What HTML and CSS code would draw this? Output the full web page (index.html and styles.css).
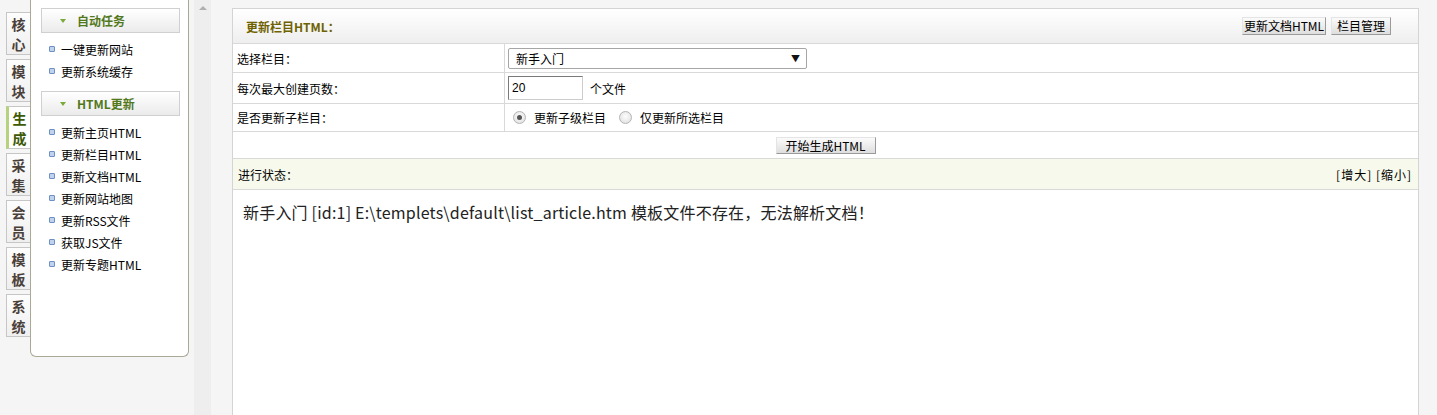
FILE: index.html
```html
<!DOCTYPE html>
<html lang="zh-CN">
<head>
    <meta charset="UTF-8">
    <title>更新栏目HTML</title>
    <link rel="stylesheet" href="styles.css">
</head>
<body>
    <div class="layout">
        <div class="tabs">
            <div class="tab">核<br>心</div>
            <div class="tab">模<br>块</div>
            <div class="tab active">生<br>成</div>
            <div class="tab">采<br>集</div>
            <div class="tab">会<br>员</div>
            <div class="tab">模<br>板</div>
            <div class="tab">系<br>统</div>
        </div>

        <div class="side">
            <div class="side-head"><span class="arrow"></span>自动任务</div>
            <ul class="side-list">
                <li>一键更新网站</li>
                <li>更新系统缓存</li>
            </ul>
            <div class="side-head"><span class="arrow"></span>HTML更新</div>
            <ul class="side-list">
                <li>更新主页HTML</li>
                <li>更新栏目HTML</li>
                <li>更新文档HTML</li>
                <li>更新网站地图</li>
                <li>更新RSS文件</li>
                <li>获取JS文件</li>
                <li>更新专题HTML</li>
            </ul>
        </div>

        <div class="strip"><span class="up"></span></div>

        <div class="main">
            <div class="main-head">
                <span class="main-title">更新栏目HTML：</span>
                <div class="head-btns">
                    <button class="btn btn-doc">更新文档HTML</button>
                    <button class="btn btn-cat">栏目管理</button>
                </div>
            </div>

            <div class="row row-select">
                <div class="label">选择栏目：</div>
                <div class="field">
                    <div class="select">新手入门<span class="caret">▼</span></div>
                </div>
            </div>
            <div class="row row-pages">
                <div class="label">每次最大创建页数：</div>
                <div class="field">
                    <div class="input">20</div>
                    <span class="unit">个文件</span>
                </div>
            </div>
            <div class="row row-radio">
                <div class="label">是否更新子栏目：</div>
                <div class="field">
                    <span class="radio checked"></span><span class="radio-text">更新子级栏目</span>
                    <span class="radio"></span><span class="radio-text">仅更新所选栏目</span>
                </div>
            </div>
            <div class="row row-submit">
                <button class="btn btn-start">开始生成HTML</button>
            </div>

            <div class="status">
                <span>进行状态：</span>
                <span class="zoom-links">[增大] [缩小]</span>
            </div>
            <div class="result">
                新手入门 [id:1] E:\templets\default\list_article.htm 模板文件不存在，无法解析文档！
            </div>
        </div>
    </div>
</body>
</html>
```

FILE: styles.css
```css
body {
    margin: 0;
    background: #f5f5f5;
    font-family: "Noto Sans CJK SC", "Liberation Sans", sans-serif;
    font-size: 12px;
    color: #000;
    overflow: hidden;
}
.layout {
    display: flex;
    align-items: flex-start;
    padding-left: 6px;
    height: 415px;
}

/* left tabs */
.tabs {
    width: 24px;
    padding-top: 12px;
    display: flex;
    flex-direction: column;
    gap: 4px;
}
.tab {
    height: 40px;
    padding-top: 1px;
    border: 1px solid #c6c6c6;
    border-right: none;
    background: linear-gradient(#fdfdfd, #efefef);
    font-size: 14px;
    font-weight: bold;
    line-height: 20px;
    text-align: center;
    color: #4a403a;
}
.tab.active {
    border-left: 3px solid #b7d27f;
    background: #fff;
    color: #3e5a05;
}

/* side menu */
.side {
    box-sizing: border-box;
    width: 159px;
    height: 357px;
    padding: 8px 8px 0 10px;
    background: #fff;
    border: 1px solid #a9a996;
    border-top: none;
    border-radius: 0 0 6px 6px;
}
.side-head {
    box-sizing: border-box;
    height: 25px;
    display: flex;
    align-items: center;
    padding-left: 18px;
    border: 1px solid #d0d0d0;
    background: linear-gradient(#ffffff, #ebebeb);
    font-weight: bold;
    color: #52781c;
}
.arrow {
    width: 0;
    height: 0;
    border-left: 3px solid transparent;
    border-right: 3px solid transparent;
    border-top: 4px solid #79ab3a;
    margin-right: 11px;
}
.side-list {
    list-style: none;
    margin: 5px 0 9px;
    padding: 0;
}
.side-list li {
    display: flex;
    align-items: center;
    height: 22px;
    padding-left: 8px;
}
.side-list li::before {
    content: "";
    width: 4px;
    height: 4px;
    border: 1px solid #6d8fc2;
    border-radius: 1px;
    background: #bfd2ee;
    margin-right: 6px;
}

/* scroll strip */
.strip {
    width: 17px;
    height: 415px;
    margin-left: 5px;
    background: #eeeeee;
    display: flex;
    justify-content: center;
}
.up {
    width: 0;
    height: 0;
    margin-top: 6px;
    border-left: 4px solid transparent;
    border-right: 4px solid transparent;
    border-bottom: 4px solid #b0b0b0;
}

/* main panel */
.main {
    box-sizing: border-box;
    width: 1187px;
    height: 420px;
    margin: 8px 0 0 21px;
    background: #fff;
    border: 1px solid #d4d4d4;
}
.main-head {
    height: 34px;
    display: flex;
    align-items: center;
    justify-content: space-between;
    padding: 0 27px 0 13px;
    background: linear-gradient(#ffffff, #eeeeee);
}
.main-title {
    font-weight: bold;
    color: #6f6200;
}
.head-btns {
    display: flex;
    gap: 5px;
}
.btn {
    box-sizing: border-box;
    height: 18px;
    padding: 0;
    border: 1px solid;
    border-color: #e4e4e4 #9a9a9a #9a9a9a #e4e4e4;
    background: linear-gradient(#fbfbfb, #dedede);
    font-family: inherit;
    font-size: 12px;
    line-height: 16px;
    color: #000;
}
.btn-doc { width: 84px; }
.btn-cat { width: 60px; }
.btn-start { width: 100px; height: 17px; line-height: 15px; }

.row {
    display: flex;
    border-top: 1px solid #d9d9d9;
}
.row-select { height: 28px; }
.row-pages { height: 30px; }
.row-radio { height: 27px; }
.row-submit {
    height: 26px;
    align-items: center;
    justify-content: center;
}
.label {
    width: 267px;
    padding-left: 4px;
    border-right: 1px solid #d9d9d9;
    display: flex;
    align-items: center;
}
.field {
    flex: 1;
    display: flex;
    align-items: center;
    padding-left: 3px;
}
.select {
    box-sizing: border-box;
    width: 299px;
    height: 21px;
    display: flex;
    align-items: center;
    justify-content: space-between;
    padding: 0 6px 0 7px;
    border: 1px solid #a6a6a6;
    border-radius: 2px;
}
.caret {
    font-size: 9px;
    color: #111;
}
.input {
    box-sizing: border-box;
    width: 75px;
    height: 24px;
    display: flex;
    align-items: center;
    padding-left: 3px;
    border: 1px solid;
    border-color: #7a7a7a #cccccc #cccccc #7a7a7a;
    font-family: "Liberation Sans", sans-serif;
}
.unit {
    margin-left: 7px;
}
.radio {
    box-sizing: border-box;
    width: 13px;
    height: 13px;
    margin-left: 5px;
    border: 1px solid #b4b4b4;
    border-radius: 50%;
    background: radial-gradient(circle at 50% 40%, #fdfdfd, #dcdcdc);
    display: flex;
    align-items: center;
    justify-content: center;
}
.radio + .radio-text + .radio {
    margin-left: 13px;
}
.radio.checked::after {
    content: "";
    width: 5px;
    height: 5px;
    border-radius: 50%;
    background: #555;
}
.radio-text {
    margin-left: 8px;
}

.status {
    height: 30px;
    display: flex;
    align-items: center;
    justify-content: space-between;
    padding: 0 6px 0 5px;
    background: #f7f9ec;
    border-top: 1px solid #d9d9d9;
    border-bottom: 1px solid #d9d9d9;
}
.zoom-links {
    letter-spacing: 1px;
}
.result {
    padding: 10px 10px;
    font-size: 16px;
    line-height: 24px;
    letter-spacing: 0.2px;
    color: #222;
}
```
